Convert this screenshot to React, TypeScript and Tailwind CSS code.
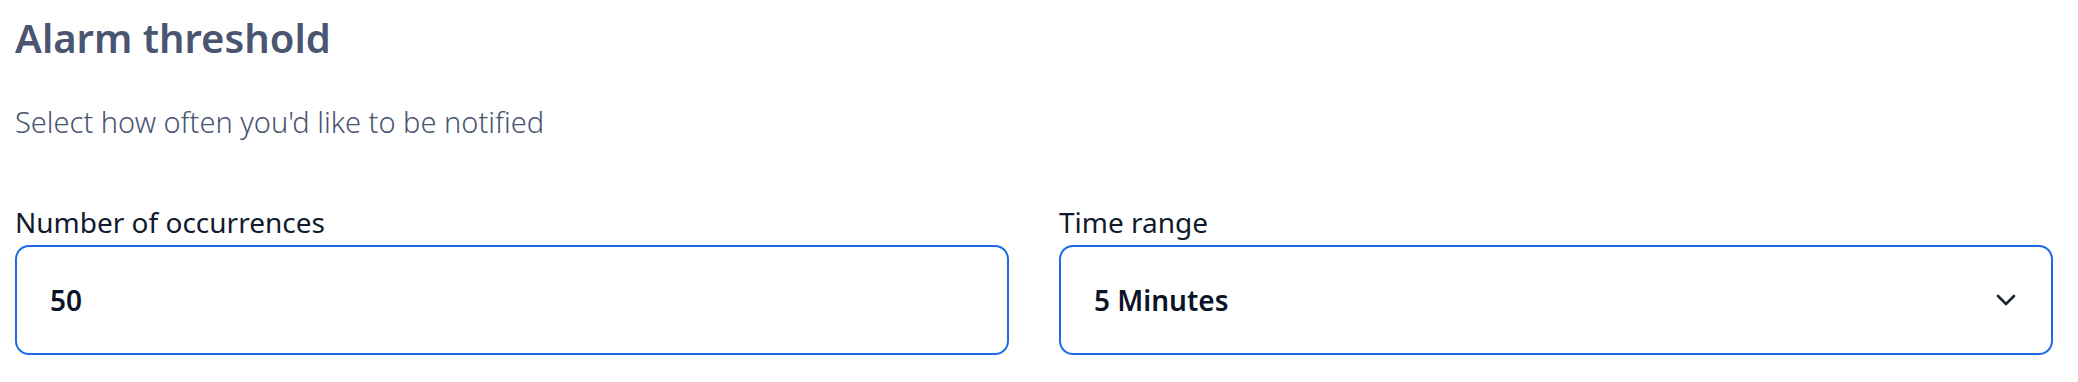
import React from "react";

export default function App() {
  return (
    <div
      className="w-[2078px] h-[382px] bg-white pl-[15px] pr-[25px] pt-[14px]"
      style={{ fontFamily: '"Noto Sans", "Open Sans", sans-serif' }}
    >
      <h1 className="text-[40px] leading-[48px] font-semibold text-[#4a5571]">
        Alarm threshold
      </h1>
      <p className="mt-[42px] text-[29px] leading-[36px] font-light text-[#4a5571]">
        Select how often you'd like to be notified
      </p>
      <div className="mt-[64px] grid grid-cols-2 gap-[50px]">
        <div className="flex flex-col">
          <label className="text-[28px] leading-[36px] text-[#111a2e]">
            Number of occurrences
          </label>
          <div className="mt-[5px] h-[110px] rounded-[14px] border-2 border-[#1f6ae6] flex items-center pl-[33px]">
            <span className="text-[28px] font-semibold text-[#0b1426]">50</span>
          </div>
        </div>
        <div className="flex flex-col">
          <label className="text-[28px] leading-[36px] text-[#111a2e]">
            Time range
          </label>
          <div className="mt-[5px] h-[110px] rounded-[14px] border-2 border-[#1f6ae6] flex items-center justify-between pl-[33px] pr-[35px]">
            <span className="text-[28px] font-semibold text-[#0b1426]">5 Minutes</span>
            <svg width="20" height="12" viewBox="0 0 20 12" fill="none">
              <polyline
                points="2,2 10,10 18,2"
                stroke="#1a2233"
                strokeWidth="2.6"
                strokeLinecap="round"
                strokeLinejoin="round"
              />
            </svg>
          </div>
        </div>
      </div>
    </div>
  );
}
